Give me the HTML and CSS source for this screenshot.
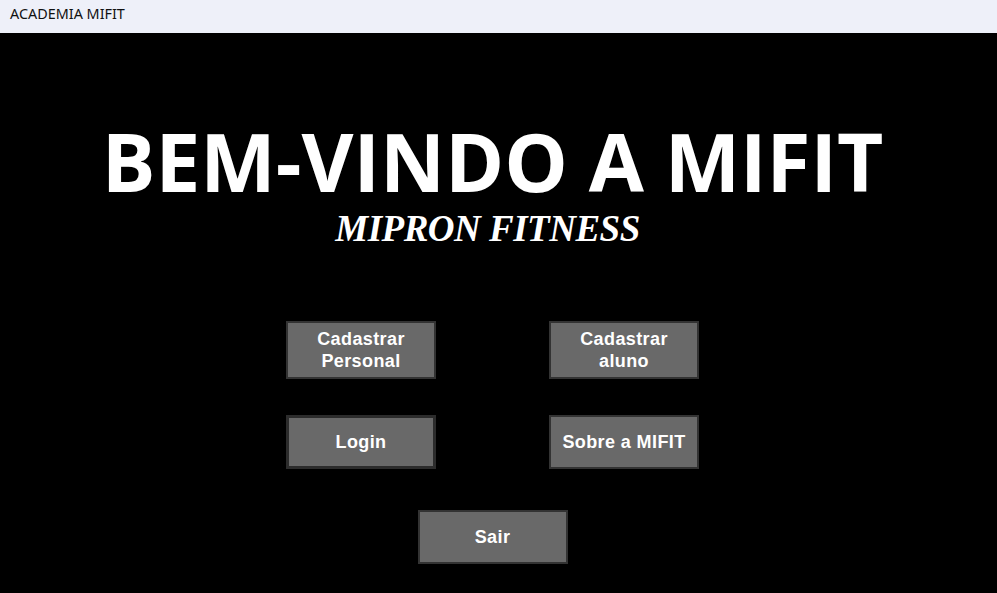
FILE: index.html
```html
<!DOCTYPE html>
<html lang="pt-BR">
  <head>
    <meta charset="UTF-8" />
    <meta name="viewport" content="width=device-width, initial-scale=1.0" />
    <title>ACADEMIA MIFIT</title>
    <link rel="stylesheet" href="styles.css">
  </head>
  <body>
    <div class="title-bar">ACADEMIA MIFIT</div>

    <div class="main">
      <div class="brand">
        <h1 class="brand-title">BEM-VINDO A MIFIT</h1>
        <h2 class="brand-subtitle">MIPRON FITNESS</h2>
      </div>

      <div class="menu-grid">
        <button class="menu-btn">Cadastrar<br>Personal</button>
        <button class="menu-btn">Cadastrar<br>aluno</button>
        <button class="menu-btn short focused">Login</button>
        <button class="menu-btn short">Sobre a MIFIT</button>
      </div>

      <button class="menu-btn short exit">Sair</button>
    </div>
  </body>
</html>
```

FILE: styles.css
```css
html,
body {
  margin: 0;
  height: 100%;
}

body {
  display: flex;
  flex-direction: column;
  background-color: #000;
}

.title-bar {
  height: 33px;
  box-sizing: border-box;
  padding: 4px 10px 0;
  background-color: #eef0f9;
  color: #111;
  font-family: "Noto Sans", "Open Sans", sans-serif;
  font-size: 14.4px;
}

.main {
  flex: 1;
  display: flex;
  flex-direction: column;
  align-items: center;
  padding-right: 12px;
}

.brand {
  display: flex;
  flex-direction: column;
  align-items: center;
  margin-top: 88px;
}

.brand-title {
  margin: 0;
  color: #fff;
  font-family: "Open Sans", "Noto Sans", sans-serif;
  font-weight: 700;
  font-size: 80px;
  line-height: 80px;
}

.brand-subtitle {
  margin: 8px 10px 0 0;
  color: #fff;
  font-family: "Liberation Serif", serif;
  font-style: italic;
  font-weight: 700;
  font-size: 37px;
  line-height: 40px;
  letter-spacing: -0.5px;
}

.menu-grid {
  display: grid;
  grid-template-columns: 150px 150px;
  column-gap: 113px;
  row-gap: 36px;
  margin-top: 72px;
}

.menu-btn {
  width: 150px;
  height: 58px;
  padding: 0;
  border: 2px solid #333;
  background-color: #696969;
  color: #fff;
  font-family: "Liberation Sans", Arial, sans-serif;
  font-weight: 700;
  font-size: 18px;
  line-height: 22px;
  letter-spacing: 0.4px;
  cursor: pointer;
}

.menu-btn.short {
  height: 54px;
}

.menu-btn.focused {
  border: 3px solid #2c2c2c;
}

.exit {
  margin-top: 41px;
}
```
